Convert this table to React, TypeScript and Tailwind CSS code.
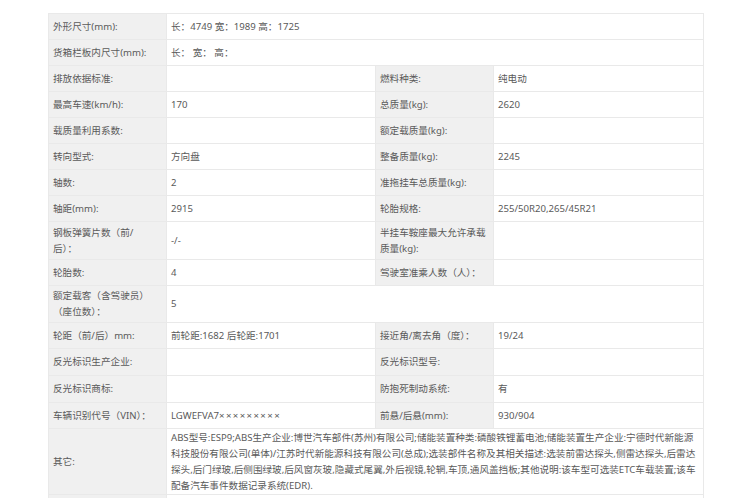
import React from 'react';

type Cell = { label: React.ReactNode; value?: React.ReactNode };
type Row = { left: Cell; right?: Cell; h?: string };

const rows: Row[] = [
  { left: { label: '外形尺寸(mm):', value: '长：4749 宽：1989 高：1725' } },
  { left: { label: '货箱栏板内尺寸(mm):', value: '长： 宽： 高：' } },
  { left: { label: '排放依据标准:', value: '' }, right: { label: '燃料种类:', value: '纯电动' } },
  { left: { label: '最高车速(km/h):', value: '170' }, right: { label: '总质量(kg):', value: '2620' } },
  { left: { label: '载质量利用系数:', value: '' }, right: { label: '额定载质量(kg):', value: '' } },
  { left: { label: '转向型式:', value: '方向盘' }, right: { label: '整备质量(kg):', value: '2245' } },
  { left: { label: '轴数:', value: '2' }, right: { label: '准拖挂车总质量(kg):', value: '' } },
  { left: { label: '轴距(mm):', value: '2915' }, right: { label: '轮胎规格:', value: '255/50R20,265/45R21' } },
  {
    left: { label: <>钢板弹簧片数（前/<br />后）：</>, value: '-/-' },
    right: { label: <>半挂车鞍座最大允许承载<br />质量(kg):</>, value: '' },
    h: 'h-[38px]',
  },
  { left: { label: '轮胎数:', value: '4' }, right: { label: '驾驶室准乘人数（人）：', value: '' } },
  { left: { label: <>额定载客（含驾驶员）<br />（座位数）：</>, value: '5' }, h: 'h-[37px]' },
  { left: { label: '轮距（前/后）mm:', value: '前轮距:1682 后轮距:1701' }, right: { label: '接近角/离去角（度）：', value: '19/24' } },
  { left: { label: '反光标识生产企业:', value: '' }, right: { label: '反光标识型号:', value: '' }, h: 'h-[27px]' },
  { left: { label: '反光标识商标:', value: '' }, right: { label: '防抱死制动系统:', value: '有' }, h: 'h-[27px]' },
  {
    left: {
      label: '车辆识别代号（VIN）：',
      value: (
        <>
          LGWEFVA7<span className="tracking-[1.4px]">×××××××××</span>
        </>
      ),
    },
    right: { label: '前悬/后悬(mm):', value: '930/904' },
  },
  {
    left: {
      label: '其它:',
      value: (
        <>
          ABS型号:ESP9;ABS生产企业:博世汽车部件(苏州)有限公司;储能装置种类:磷酸铁锂蓄电池;储能装置生产企业:宁德时代新能源<br />
          科技股份有限公司(单体)/江苏时代新能源科技有限公司(总成);选装部件名称及其相关描述:选装前雷达探头,侧雷达探头,后雷达<br />
          探头,后门绿玻,后侧围绿玻,后风窗灰玻,隐藏式尾翼,外后视镜,轮辋,车顶,通风盖挡板;其他说明:该车型可选装ETC车载装置;该车<br />
          配备汽车事件数据记录系统(EDR).
        </>
      ),
    },
    h: 'h-[66px]',
  },
  { left: { label: '', value: '' } },
];

const labelCls = 'border border-[#e9e9e9] bg-[#f0f0f0] px-1 align-middle whitespace-nowrap';
const valueCls = 'border border-[#e9e9e9] bg-white px-1 align-middle whitespace-nowrap';

export default function App() {
  return (
    <div
      className="min-h-screen bg-white pl-[48px] pt-[13px]"
      style={{ fontFamily: '"Noto Sans", "Noto Sans CJK SC", sans-serif' }}
    >
      <table className="w-[655px] table-fixed border-collapse text-[9.6px] leading-4 text-[#5a5a5a]">
        <colgroup>
          <col className="w-[118px]" />
          <col className="w-[209px]" />
          <col className="w-[118px]" />
          <col className="w-[210px]" />
        </colgroup>
        <tbody>
          {rows.map((r, i) => (
            <tr key={i} className={r.h ?? 'h-[26px]'}>
              <td className={labelCls}>{r.left.label}</td>
              {r.right ? (
                <>
                  <td className={valueCls}>{r.left.value}</td>
                  <td className={labelCls}>{r.right.label}</td>
                  <td className={valueCls}>{r.right.value}</td>
                </>
              ) : (
                <td className={valueCls} colSpan={3}>
                  {r.left.value}
                </td>
              )}
            </tr>
          ))}
        </tbody>
      </table>
    </div>
  );
}
